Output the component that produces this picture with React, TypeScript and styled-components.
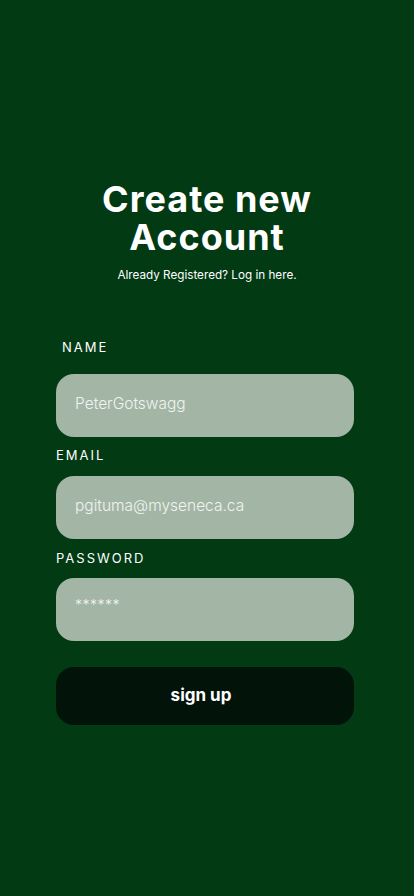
import React from "react";
import styled, { createGlobalStyle } from "styled-components";

const Global = createGlobalStyle`
  html, body { margin: 0; padding: 0; background: #013a13; }
  body { font-family: "Inter", "Noto Sans", sans-serif; }
  * { box-sizing: border-box; }
`;

const Page = styled.div`
  width: 414px;
  min-height: 896px;
  background: #013a13;
  display: flex;
  flex-direction: column;
  align-items: center;
  padding-top: 180px;
`;

const Title = styled.h1`
  margin: 0;
  color: #ffffff;
  font-family: "Inter", sans-serif;
  font-weight: 700;
  font-size: 36px;
  line-height: 38px;
  text-align: center;
  letter-spacing: 1px;
`;

const Subtitle = styled.p`
  margin: 12px 0 0;
  color: #ffffff;
  font-family: "Inter", sans-serif;
  font-size: 11.7px;
  line-height: 14px;
`;

const Form = styled.form`
  width: 298px;
  margin-top: 57px;
  margin-left: -4px;
  display: flex;
  flex-direction: column;
`;

const Label = styled.label<{ $indent?: number; $gap: number }>`
  display: block;
  color: #ffffff;
  font-family: "Inter", sans-serif;
  font-size: 13px;
  line-height: 16px;
  letter-spacing: 2px;
  padding-left: ${(p) => p.$indent ?? 0}px;
  margin-bottom: ${(p) => p.$gap}px;
`;

const Field = styled.div<{ $after: number }>`
  height: 63px;
  border-radius: 18px;
  background: #a3b6a6;
  color: #f0f3f0;
  font-family: "Inter", sans-serif;
  font-weight: 300;
  font-size: 15.5px;
  padding: 0 19px 4px;
  display: flex;
  align-items: center;
  margin-bottom: ${(p) => p.$after}px;
`;

const Stars = styled.span`
  font-size: 14px;
  letter-spacing: 0.5px;
  transform: translateY(-3px);
`;

const Button = styled.button`
  margin-top: 26px;
  height: 58px;
  border: none;
  border-radius: 18px;
  background: #02140a;
  color: #ffffff;
  font-family: "Inter", sans-serif;
  font-weight: 700;
  font-size: 17px;
  padding: 0 8px 2px 0;
`;

export default function App() {
  return (
    <>
      <Global />
      <Page>
        <Title>
          Create new
          <br />
          Account
        </Title>
        <Subtitle>Already Registered? Log in here.</Subtitle>
        <Form>
          <Label $indent={6} $gap={19}>NAME</Label>
          <Field $after={10}>PeterGotswagg</Field>
          <Label $gap={13}>EMAIL</Label>
          <Field $after={11}>pgituma@myseneca.ca</Field>
          <Label $gap={12}>PASSWORD</Label>
          <Field $after={0}>
            <Stars>******</Stars>
          </Field>
          <Button type="button">sign up</Button>
        </Form>
      </Page>
    </>
  );
}
